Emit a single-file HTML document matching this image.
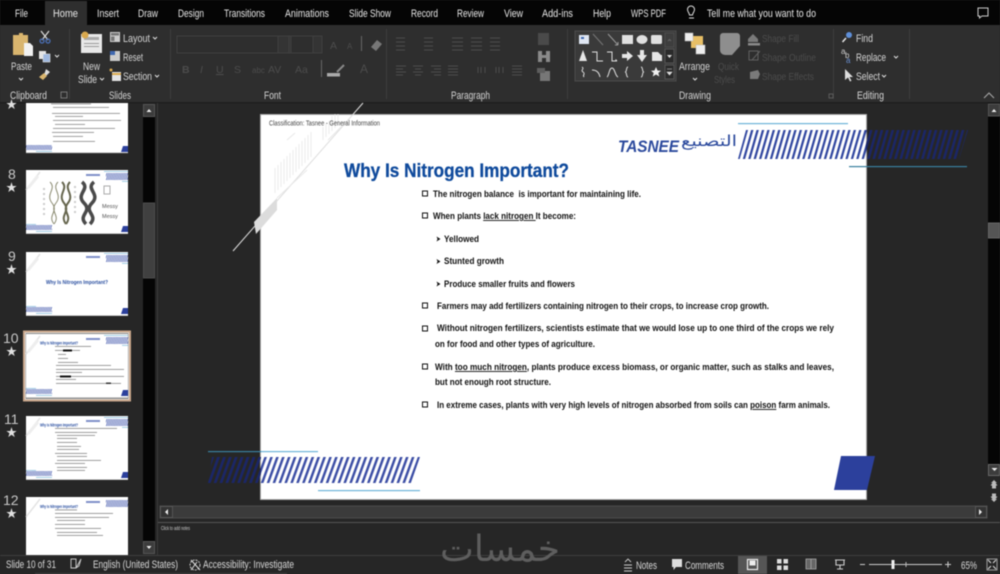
<!DOCTYPE html>
<html><head><meta charset="utf-8"><title>Slide</title>
<style>
html,body{margin:0;padding:0;width:1000px;height:574px;overflow:hidden;background:#262626}
svg{display:block;filter:blur(.4px)}
text{font-family:"Liberation Sans","Noto Sans CJK SC",sans-serif;white-space:pre}
.m{font-size:11px;fill:#e8e8e8}
.l{font-size:11px;fill:#d4d4d4}
.d{font-size:10.5px;fill:#4c4c4c}
.s{font-size:11px;fill:#d8d8d8}
.n{font-size:14px;fill:#c8c8c8}
.b{font-size:9px;font-weight:bold;fill:#111}
.bl{fill:none;stroke:#111;stroke-width:1}
.gs{fill:none;stroke:#4c4c4c;stroke-width:1}
.ws{fill:none;stroke:#e0e0e0;stroke-width:1}
.st{font-size:11px;fill:#e0e0e0}
.tt{font-size:4.800px;font-weight:bold;fill:#2a4fa0}
</style></head><body>
<svg width="1000" height="574" viewBox="0 0 1000 574" xmlns="http://www.w3.org/2000/svg">
<defs>
<pattern id="h1" patternUnits="userSpaceOnUse" width="5.4" height="30" patternTransform="skewX(-16)"><rect width="2.3" height="30" fill="#2f459f"/></pattern>
<pattern id="h2" patternUnits="userSpaceOnUse" width="5.4" height="30" patternTransform="skewX(-16)"><rect width="2.6" height="30" fill="#1b2668"/></pattern>
<pattern id="h3" patternUnits="userSpaceOnUse" width="5.9" height="30" patternTransform="skewX(-20)"><rect width="2.6" height="30" fill="#3c4ea5"/></pattern>
<pattern id="h4" patternUnits="userSpaceOnUse" width="5.9" height="30" patternTransform="skewX(-20)"><rect width="2.8" height="30" fill="#1b2668"/></pattern>
<pattern id="h5" patternUnits="userSpaceOnUse" width="1.6" height="10" patternTransform="skewX(-18)"><rect width=".8" height="10" fill="#4c60b0"/></pattern>
<g id="thbase">
<rect width="102" height="64" fill="#fff"/>
<path d="M0 20L14 2" stroke="#e4e4e4" stroke-width="1.500"/>
<path d="M2 18l10-12" stroke="#eee" stroke-width="3"/>
<rect x="60" y="4" width="14" height="2" fill="#7f90c8"/>
<rect x="80" y="3" width="22" height="7" fill="url(#h5)"/>
<rect x="78" y="1" width="24" height=".8" fill="#8fc4e0"/>
<rect x="96" y="11" width="6" height=".8" fill="#8fc4e0"/>
<rect x="0" y="55" width="26" height="5" fill="url(#h5)"/>
<rect x="0" y="54" width="10" height=".7" fill="#8fc4e0"/>
<rect x="10" y="61" width="16" height=".8" fill="#8fc4e0"/>
<path d="M97 56H102V62H95Z" fill="#2c409c"/>
<rect x="0" y="63.400" width="102" height=".6" fill="#aaa"/>
</g>
</defs>

<!-- base -->
<rect width="1000" height="574" fill="#262626"/>
<rect width="1000" height="25" fill="#050505"/>
<rect y="25" width="1000" height="77" fill="#2e2e2e"/>
<rect y="102" width="1000" height="1.500" fill="#1e1e1e"/>
<rect x="45" y="1" width="42" height="24" fill="#2e2e2e"/>

<!-- menu -->
<text class="m" x="15" y="17" textLength="13" lengthAdjust="spacingAndGlyphs">File</text>
<text class="m" x="53" y="17" textLength="25" lengthAdjust="spacingAndGlyphs">Home</text>
<text class="m" x="97" y="17" textLength="22" lengthAdjust="spacingAndGlyphs">Insert</text>
<text class="m" x="138" y="17" textLength="20" lengthAdjust="spacingAndGlyphs">Draw</text>
<text class="m" x="178" y="17" textLength="26" lengthAdjust="spacingAndGlyphs">Design</text>
<text class="m" x="224" y="17" textLength="41" lengthAdjust="spacingAndGlyphs">Transitions</text>
<text class="m" x="285" y="17" textLength="44" lengthAdjust="spacingAndGlyphs">Animations</text>
<text class="m" x="349" y="17" textLength="42" lengthAdjust="spacingAndGlyphs">Slide Show</text>
<text class="m" x="411" y="17" textLength="27" lengthAdjust="spacingAndGlyphs">Record</text>
<text class="m" x="457" y="17" textLength="27" lengthAdjust="spacingAndGlyphs">Review</text>
<text class="m" x="504" y="17" textLength="19" lengthAdjust="spacingAndGlyphs">View</text>
<text class="m" x="542" y="17" textLength="31" lengthAdjust="spacingAndGlyphs">Add-ins</text>
<text class="m" x="593" y="17" textLength="18" lengthAdjust="spacingAndGlyphs">Help</text>
<text class="m" x="631" y="17" textLength="35" lengthAdjust="spacingAndGlyphs">WPS PDF</text>
<path d="M689 18h5M689.500 15c0-2-2-3-2-5.500a3.500 3.500 0 0 1 7 0c0 2.500-2 3.500-2 5.500z" fill="none" stroke="#ddd" stroke-width="1"/>
<text class="m" x="707" y="17" textLength="109" lengthAdjust="spacingAndGlyphs">Tell me what you want to do</text>
<path d="M978 8h10v8h-6l-2.500 2v-2h-1.500z" fill="none" stroke="#ccc" stroke-width="1"/>

<!-- separators -->
<g fill="#3d3d3d">
<rect x="69" y="29" width="1" height="70"/><rect x="170" y="29" width="1" height="70"/>
<rect x="386" y="29" width="1" height="70"/><rect x="567" y="29" width="1" height="70"/>
<rect x="833" y="29" width="1" height="70"/><rect x="909" y="29" width="1" height="70"/>
</g>

<!-- Clipboard -->
<path d="M13 35h6v-2h4v2h5v20H13z" fill="#d9b56e"/>
<path d="M24 43h6l3 3v10h-9z" fill="#f2f2f2"/>
<path d="M41 31l7 9M49 31l-7 9" stroke="#ddd" stroke-width="1.200"/>
<circle cx="42" cy="41" r="2" fill="none" stroke="#4a6fb5" stroke-width="1.300"/><circle cx="48" cy="41" r="2" fill="none" stroke="#4a6fb5" stroke-width="1.300"/>
<rect x="39" y="51" width="7" height="8" fill="#e4e4e4"/><rect x="43" y="54" width="7" height="8" fill="#9fb8df" stroke="#e4e4e4" stroke-width=".6"/>
<path d="M55 55l2 2 2-2" class="ws" stroke-width=".8"/>
<path d="M46 69l4 3-5 5-1-2z" fill="#ddd"/><path d="M44 73l3 3-4 4-4-3z" fill="#d9b56e"/>
<text class="l" x="11" y="70" textLength="21" lengthAdjust="spacingAndGlyphs">Paste</text>
<path d="M19 78l2 2 2-2" class="ws"/>
<text class="l" x="10" y="99" textLength="37" lengthAdjust="spacingAndGlyphs">Clipboard</text>
<rect x="61" y="92" width="6" height="6" fill="none" stroke="#888" stroke-width=".8"/>

<!-- Slides -->
<rect x="81" y="34" width="21" height="19" fill="#e8e8e8"/><rect x="84" y="37" width="15" height="3" fill="#aaa"/><rect x="84" y="43" width="15" height="1" fill="#999"/><rect x="84" y="46" width="15" height="1" fill="#999"/>
<circle cx="85" cy="35" r="3.500" fill="#d9a94e"/>
<text class="l" x="83" y="70" textLength="17" lengthAdjust="spacingAndGlyphs">New</text>
<text class="l" x="78" y="83" textLength="19" lengthAdjust="spacingAndGlyphs">Slide</text>
<path d="M100 78l2 2 2-2" class="ws"/>
<rect x="110" y="32" width="10" height="10" fill="#ccc"/><rect x="111" y="33" width="8" height="2.500" fill="#777"/><rect x="111" y="36.500" width="3.500" height="4.500" fill="#777"/>
<text class="l" x="123" y="42" textLength="27" lengthAdjust="spacingAndGlyphs">Layout</text><path d="M153 37l2 2 2-2" class="ws"/>
<rect x="110" y="51" width="10" height="10" fill="#ccc"/><rect x="110" y="51" width="5" height="4" fill="#3f68b0"/>
<text class="l" x="123" y="61" textLength="20" lengthAdjust="spacingAndGlyphs">Reset</text>
<rect x="112" y="72" width="9" height="9" fill="#e4e4e4"/><rect x="112" y="73" width="9" height="2" fill="#d9a94e"/><circle cx="111" cy="70" r="1.500" fill="#d9a94e"/>
<text class="l" x="123" y="80" textLength="29" lengthAdjust="spacingAndGlyphs">Section</text><path d="M155 75l2 2 2-2" class="ws"/>
<text class="l" x="109" y="99" textLength="22" lengthAdjust="spacingAndGlyphs">Slides</text>

<!-- Font (disabled) -->
<rect x="177" y="36" width="114" height="17" fill="none" stroke="#404040"/>
<rect x="278" y="36" width="13" height="17" fill="#343434" stroke="#404040"/>
<rect x="289" y="36" width="33" height="17" fill="none" stroke="#404040"/>
<rect x="313" y="36" width="9" height="17" fill="#343434" stroke="#404040"/>
<text class="d" x="330" y="49">A</text><text class="d" x="347" y="49" style="font-size:8px">A</text>
<text class="d" x="182" y="73" style="font-weight:bold">B</text><text class="d" x="200" y="73" style="font-style:italic">I</text>
<text class="d" x="216" y="73" style="text-decoration:underline">U</text><text class="d" x="234" y="73">S</text>
<text class="d" x="252" y="73" style="font-size:8px">abc</text><text class="d" x="268" y="73">AV</text><text class="d" x="295" y="73">Aa</text>
<text class="d" x="360" y="73" style="font-size:12px">A</text>
<rect x="321" y="60" width="1" height="17" fill="#666"/>
<rect x="361" y="36" width="1" height="15" fill="#666"/>
<path d="M371 47l6-7 5 4-6 7z" fill="#777"/>
<path d="M337 72l7-7" stroke="#888" stroke-width="2"/><rect x="327" y="73" width="13" height="3.500" fill="#aaa"/>
<text class="l" x="264" y="99" textLength="17" lengthAdjust="spacingAndGlyphs">Font</text>

<!-- Paragraph (disabled) -->
<path class="gs" d="M396 38h9M396 42h9M396 46h9M396 50h9M424 38h9M424 42h9M424 46h9M424 50h9M452 38h11M452 42h11M452 46h11M452 50h11M471 38h11M471 42h11M471 46h11M471 50h11M490 38h10M490 42h10M490 46h10M490 50h10"/>
<path class="gs" d="M396 66h10M396 69h7M396 72h10M396 75h7M413 66h10M415 69h6M413 72h10M415 75h6M431 66h10M434 69h7M431 72h10M434 75h7M448 66h10M448 69h10M448 72h10M448 75h10M478 67v6M481 67v6M485 67v6M496 67v6M499 67v6M503 67v6M512 66h10M512 69h10M512 72h10M512 75h10"/>
<rect x="538" y="33" width="11" height="12" fill="#4a4a4a"/>
<rect x="538" y="51" width="4" height="11" fill="#8a8a8a"/><rect x="546" y="51" width="4" height="11" fill="#8a8a8a"/><rect x="541" y="55" width="6" height="3" fill="#8a8a8a"/>
<rect x="540" y="71" width="10" height="10" fill="#777"/><rect x="537" y="68" width="8" height="5" fill="#5e5e5e"/>
<text class="l" x="451" y="99" textLength="39" lengthAdjust="spacingAndGlyphs">Paragraph</text>

<!-- Shape gallery -->
<rect x="575" y="31" width="101" height="50" fill="#3a3a3a" stroke="#4c4c4c"/>
<rect x="579" y="35" width="10" height="9" fill="#dfe6f2"/><rect x="581" y="37" width="3" height="2" fill="#3f68b0"/>
<path d="M593 34l10 11" stroke="#777" stroke-width="1"/>
<path d="M608 34l10 11M618 45v-3M618 45h-3" fill="none" stroke="#999" stroke-width="1"/>
<rect x="622" y="35" width="11" height="9" fill="#e0e0e0"/>
<ellipse cx="642" cy="39.500" rx="5.500" ry="4.500" fill="#e0e0e0"/>
<rect x="651" y="35" width="11" height="9" rx="1.500" fill="#e0e0e0"/>
<path d="M579 61l4-11 4 11z" fill="#e6e6e6"/>
<path d="M592 52h5v9h6" class="ws"/>
<path d="M607 52h5v9h5M617 61l-1.500-1.500" class="ws"/>
<path d="M622 54h5v-3l6 5-6 5v-3h-5z" fill="#e6e6e6"/>
<path d="M640 50h4v5h3l-5 7-5-7h3z" fill="#e6e6e6"/>
<path d="M652 52h6l3 3h1v6h-10z" fill="#e6e6e6"/>
<path d="M582 67c3 2-2 3 1 5s-1 3 1 5" class="ws"/>
<path d="M592 70c4 0 7 2 8 7" class="ws"/>
<path d="M607 77c2-1 2-9 5-9s3 8 6 9" class="ws"/>
<path d="M628 67c-2 0-1 4-2.500 5 1.500 1 .5 5 2.500 5" class="ws"/>
<path d="M641 67c2 0 1 4 2.500 5-1.500 1-.5 5-2.500 5" class="ws"/>
<path d="M656 67l1.500 3.500 3.500.3-2.700 2.200 1 3.500-3.300-2-3.300 2 1-3.500-2.700-2.200 3.500-.3z" fill="#eee"/>
<rect x="665" y="33" width="9" height="14" fill="#3e3e3e" stroke="#4c4c4c"/><path d="M668 41l1.500-1.500 1.500 1.500" stroke="#666" fill="none"/>
<rect x="665" y="49" width="9" height="14" fill="#2b2b2b" stroke="#555"/><path d="M667 55h5l-2.500 3z" fill="#ddd"/>
<rect x="665" y="65" width="9" height="14" fill="#2b2b2b" stroke="#555"/><path d="M667 69h5M667 72h5l-2.500 3z" fill="#ddd" stroke="#ddd" stroke-width=".6"/>
<text class="l" x="679" y="99" textLength="32" lengthAdjust="spacingAndGlyphs">Drawing</text>
<rect x="829" y="94" width="4" height="4" fill="none" stroke="#666" stroke-width=".8"/>

<!-- Arrange -->
<rect x="691" y="36" width="12" height="12" fill="#e8bf66"/>
<rect x="685" y="33" width="8" height="8" fill="#eee" stroke="#bbb" stroke-width=".5"/>
<rect x="696" y="45" width="9" height="9" fill="#eee" stroke="#bbb" stroke-width=".5"/>
<text class="l" x="679" y="70" textLength="31" lengthAdjust="spacingAndGlyphs">Arrange</text>
<path d="M693 78l2 2 2-2" class="ws"/>
<path d="M723 33h14a3 3 0 0 1 3 3v10l-8 9h-7a5 5 0 0 1-5-5V36a3 3 0 0 1 3-3z" fill="#8e8e8e"/>
<text class="d" x="718" y="70" textLength="21" lengthAdjust="spacingAndGlyphs">Quick</text>
<text class="d" x="714" y="83" textLength="21" lengthAdjust="spacingAndGlyphs">Styles</text>
<path d="M748 42h10v-3l-5-5-5 5z" fill="#7a7a7a"/><rect x="748" y="43" width="12" height="2.500" fill="#8a8a8a"/>
<text class="d" x="762" y="42" textLength="37" lengthAdjust="spacingAndGlyphs">Shape Fill</text>
<rect x="749" y="51" width="9" height="9" fill="none" stroke="#606060"/><path d="M752 60l8-9" stroke="#606060"/>
<text class="d" x="762" y="61" textLength="54" lengthAdjust="spacingAndGlyphs">Shape Outline</text>
<path d="M750 72l8-2 2 4-2 5-8 0z" fill="#7a7a7a"/>
<text class="d" x="762" y="80" textLength="52" lengthAdjust="spacingAndGlyphs">Shape Effects</text>

<!-- Editing -->
<circle cx="849" cy="35" r="3" fill="#5f8fd8"/><path d="M846 38l-3.500 4" stroke="#e8e8e8" stroke-width="1.500"/>
<text class="l" x="856" y="42" textLength="17" lengthAdjust="spacingAndGlyphs">Find</text>
<text x="841" y="54" style="font-size:8px;fill:#ccc">a</text><text x="845" y="58" style="font-size:8px;fill:#ccc">b</text><text x="846" y="63" style="font-size:8px;fill:#6a8fd0">a</text>
<text class="l" x="856" y="61" textLength="30" lengthAdjust="spacingAndGlyphs">Replace</text><path d="M894 56l2 2 2-2" class="ws"/>
<path d="M845 69v11l3-2.500 2 4 1.500-.8-2-3.700h3.500z" fill="#ddd"/>
<text class="l" x="856" y="80" textLength="24" lengthAdjust="spacingAndGlyphs">Select</text><path d="M882 75l2 2 2-2" class="ws"/>
<text class="l" x="857" y="99" textLength="27" lengthAdjust="spacingAndGlyphs">Editing</text>
<path d="M984 98l5-5 5 5" fill="none" stroke="#aaa" stroke-width="1"/>

<!-- Left scrollbar -->
<rect x="143" y="104" width="12" height="449" fill="#050505"/>
<rect x="143.500" y="104.500" width="11" height="12" fill="#3c3c3c" stroke="#555"/>
<path d="M146.500 112h5l-2.500-3z" fill="#eee"/>
<rect x="143.500" y="203" width="11" height="75" fill="#404040" stroke="#4c4c4c"/>
<rect x="143.500" y="541.500" width="11" height="12" fill="#3c3c3c" stroke="#555"/>
<path d="M146.500 546h5l-2.500 3z" fill="#eee"/>
<rect x="157" y="103" width="1" height="452" fill="#3a3a3a"/>

<!-- Thumbnails -->
<rect x="26" y="103" width="102" height="50" fill="#fff"/>
<g fill="#8a8a8a">
<rect x="51" y="103.500" width="40" height=".8"/><rect x="53" y="107" width="56" height=".8"/>
<rect x="52" y="113" width="68" height=".8"/><rect x="55" y="116" width="28" height=".8"/>
<rect x="53" y="120" width="68" height=".8"/><rect x="55" y="124" width="30" height=".8"/>
<rect x="53" y="128" width="62" height=".8"/><rect x="52" y="132" width="42" height=".8"/>
<rect x="53" y="136" width="30" height=".8"/><rect x="53" y="141" width="42" height=".8"/>
</g>
<rect x="26" y="145" width="26" height="5" fill="url(#h5)"/><rect x="36" y="151" width="16" height=".8" fill="#8fc4e0"/>
<path d="M123 146H128V152H121Z" fill="#2c409c"/>
<rect x="26" y="152.500" width="102" height=".7" fill="#aaa"/>
<text x="6" y="108" class="st">★</text>

<text class="n" x="8" y="179">8</text>
<text x="6" y="191" class="st">★</text>
<use href="#thbase" x="26" y="170"/>
<g fill="none">
<path d="M50 182c7 7-5 12 2 21s-5 12 2 21M58 182c-7 7 5 12-2 21s5 12-2 21" stroke="#8a8a70" stroke-width="1"/>
<path d="M62 182c7 7-5 12 2 21s-5 12 2 21M70 182c-7 7 5 12-2 21s5 12-2 21" stroke="#66664e" stroke-width="2"/>
<path d="M82 182c9 7-7 12 2 21s-7 12 2 21M94 182c-9 7 7 12-2 21s7 12-2 21" stroke="#4a4a4a" stroke-width="3.500"/>
<path d="M44 188v30M75 186v30" stroke="#ccc" stroke-width="2" stroke-dasharray="2 3"/>
</g>
<rect x="104" y="186" width="6" height="8" fill="none" stroke="#aaa"/>
<text x="102" y="208" style="font-size:5.500px;fill:#555">Messy</text>
<text x="102" y="218" style="font-size:5.500px;fill:#555">Messy</text>

<text class="n" x="8" y="261">9</text>
<text x="6" y="273" class="st">★</text>
<use href="#thbase" x="26" y="252"/>
<text x="46" y="284" style="font-size:5.500px;font-weight:bold;fill:#2a4fa0" textLength="62" lengthAdjust="spacingAndGlyphs">Why Is Nitrogen Important?</text>

<text class="n" x="3" y="343">10</text>
<text x="6" y="355" class="st">★</text>
<rect x="24" y="331.500" width="106" height="69" fill="#fff" stroke="#c9a78c" stroke-width="2"/>
<rect x="26" y="333.500" width="102" height="65" fill="#fff" stroke="#666" stroke-width=".8"/>
<use href="#thbase" x="26" y="334"/>
<text class="tt" x="40" y="344.500" textLength="38" lengthAdjust="spacingAndGlyphs">Why Is Nitrogen Important?</text>
<g fill="#888">
<rect x="55" y="346" width="36" height=".8"/><rect x="55" y="350" width="25" height=".8"/>
<rect x="58" y="354" width="8" height=".8"/><rect x="58" y="358" width="10" height=".8"/><rect x="58" y="362" width="20" height=".8"/>
<rect x="56" y="365" width="55" height=".8"/><rect x="56" y="369" width="68" height=".8"/><rect x="56" y="372" width="26" height=".8"/>
<rect x="56" y="376" width="68" height=".8"/><rect x="56" y="379" width="20" height=".8"/><rect x="56" y="383" width="65" height=".8"/>
<rect x="63" y="349.500" width="9" height="2" fill="#111"/><rect x="60" y="375.500" width="11" height="2" fill="#111"/><rect x="106" y="382.500" width="5" height="1.500" fill="#333"/>
</g>

<text class="n" x="4" y="424">11</text>
<text x="6" y="436" class="st">★</text>
<use href="#thbase" x="26" y="416"/>
<text class="tt" x="40" y="426.500" textLength="38" lengthAdjust="spacingAndGlyphs">Why Is Nitrogen Important?</text>
<g fill="#888">
<rect x="55" y="428" width="62" height=".8"/><rect x="55" y="432" width="42" height=".8"/><rect x="57" y="435" width="38" height=".8"/>
<rect x="57" y="438" width="20" height=".8"/><rect x="57" y="442" width="20" height=".8"/><rect x="57" y="446" width="24" height=".8"/>
<rect x="57" y="449" width="22" height=".8"/><rect x="55" y="453" width="32" height=".8"/><rect x="57" y="456" width="30" height=".8"/>
<rect x="57" y="460" width="44" height=".8"/><rect x="55" y="463" width="30" height=".8"/><rect x="57" y="467" width="30" height=".8"/><rect x="57" y="470" width="28" height=".8"/>
</g>

<text class="n" x="3" y="505">12</text>
<text x="6" y="517" class="st">★</text>
<rect x="26" y="497" width="102" height="58" fill="#fff"/>
<path d="M26 517L40 499" stroke="#e4e4e4" stroke-width="1.500"/>
<rect x="86" y="501" width="14" height="2" fill="#7f90c8"/><rect x="106" y="500" width="22" height="7" fill="url(#h5)"/>
<text class="tt" x="40" y="508" textLength="38" lengthAdjust="spacingAndGlyphs">Why Is Nitrogen Important?</text>
<g fill="#888">
<rect x="55" y="509.500" width="22" height=".8"/><rect x="55" y="513" width="58" height=".8"/><rect x="55" y="517" width="54" height=".8"/>
<rect x="57" y="520" width="28" height=".8"/><rect x="55" y="524" width="30" height=".8"/><rect x="55" y="528" width="46" height=".8"/>
<rect x="57" y="532" width="40" height=".8"/><rect x="57" y="535" width="46" height=".8"/>
</g>

<!-- Slide -->
<rect x="260" y="114" width="607" height="386" fill="#aaa"/>
<rect x="261" y="115" width="605" height="384" fill="#fff"/>

<!-- top-left decor -->
<path d="M233 251L363 103" stroke="#dedede" stroke-width="1"/>
<path d="M254 222L277 198V210L256 234Z" fill="#dcdcdc"/>
<g stroke="#e8e8e8" stroke-width=".9">
<path d="M275 193v-25M278 190v-25M281 187v-25M284 184v-25M287 181v-25M290 178v-25M293 175v-25M296 172v-25M299 169v-25M302 166v-25M305 163v-25M308 160v-25M311 157v-25"/>
<path d="M323 140v-13M326 137v-13M329 134v-13M332 131v-15M335 128v-14M338 125v-11"/>
<path d="M287 140l8-7M328 140l17-17M307 170l-30 28"/>
</g>

<text x="269" y="125.500" style="font-size:7px;fill:#444" textLength="111" lengthAdjust="spacingAndGlyphs">Classification: Tasnee - General Information</text>

<text x="344" y="177" style="font-size:19px;font-weight:bold;fill:#0f4a9c" textLength="225" lengthAdjust="spacingAndGlyphs" stroke="#0f4a9c" stroke-width=".3">Why Is Nitrogen Important?</text>

<!-- logo -->
<text x="618" y="152" style="font-size:17px;font-weight:bold;font-style:italic;fill:#2c4a9d" textLength="61" lengthAdjust="spacingAndGlyphs">TASNEE</text>
<text x="681" y="146" style="font-size:15px;fill:#2c4a9d;font-family:'DejaVu Sans',sans-serif" textLength="56" lengthAdjust="spacingAndGlyphs">التصنيع</text>

<!-- top hatch -->
<rect x="738" y="123" width="110" height="1.200" fill="#6db4d8"/>
<rect x="849" y="166" width="118" height="1.200" fill="#3a7f9e"/>
<path d="M738 159L746 130H866V159Z" fill="url(#h1)"/>
<path d="M866 159V130H968L959 159Z" fill="url(#h2)"/>

<!-- bottom hatch -->
<rect x="208" y="451" width="53" height="1.200" fill="#3a7f9e"/>
<rect x="261" y="451" width="57" height="1.200" fill="#6db4d8"/>
<rect x="318" y="490" width="102" height="1.200" fill="#6db4d8"/>
<path d="M208 483L212 457H261V483Z" fill="url(#h4)"/>
<path d="M261 483V457H420L411 483Z" fill="url(#h3)"/>

<!-- blue shape -->
<path d="M841 456H875L867 490H834Z" fill="#2c409c"/>

<!-- Bullets -->
<rect class="bl" x="422.500" y="191" width="5" height="5"/>
<rect class="bl" x="422.500" y="213" width="5" height="5"/>
<rect class="bl" x="422.500" y="303" width="5" height="5"/>
<rect class="bl" x="422.500" y="326" width="5" height="5"/>
<rect class="bl" x="422.500" y="364" width="5" height="5"/>
<rect class="bl" x="422.500" y="402" width="5" height="5"/>
<path d="M436.500 236.500l4 2.500-4 2.500 1-2.500zM436.500 259l4 2.500-4 2.500 1-2.500zM436.500 281.500l4 2.500-4 2.500 1-2.500z" fill="#111"/>
<text class="b" x="433" y="197" textLength="208" lengthAdjust="spacingAndGlyphs">The nitrogen balance  is important for maintaining life.</text>
<text class="b" x="433" y="219" textLength="143" lengthAdjust="spacingAndGlyphs">When plants <tspan text-decoration="underline">lack nitrogen </tspan>It become:</text>
<text class="b" x="444" y="242" textLength="35" lengthAdjust="spacingAndGlyphs">Yellowed</text>
<text class="b" x="444" y="264" textLength="60" lengthAdjust="spacingAndGlyphs">Stunted growth</text>
<text class="b" x="444" y="287" textLength="131" lengthAdjust="spacingAndGlyphs">Produce smaller fruits and flowers</text>
<text class="b" x="437" y="309" textLength="332" lengthAdjust="spacingAndGlyphs">Farmers may add fertilizers containing nitrogen to their crops, to increase crop growth.</text>
<text class="b" x="437" y="331" textLength="397" lengthAdjust="spacingAndGlyphs">Without nitrogen fertilizers, scientists estimate that we would lose up to one third of the crops we rely</text>
<text class="b" x="435" y="347" textLength="160" lengthAdjust="spacingAndGlyphs">on for food and other types of agriculture.</text>
<text class="b" x="435" y="370" textLength="399" lengthAdjust="spacingAndGlyphs">With <tspan text-decoration="underline">too much nitrogen</tspan>, plants produce excess biomass, or organic matter, such as stalks and leaves,</text>
<text class="b" x="435" y="385" textLength="116" lengthAdjust="spacingAndGlyphs">but not enough root structure.</text>
<text class="b" x="437" y="408" textLength="393" lengthAdjust="spacingAndGlyphs">In extreme cases, plants with very high levels of nitrogen absorbed from soils can <tspan text-decoration="underline">poison</tspan> farm animals.</text>

<!-- Main vertical scrollbar -->
<rect x="988" y="103" width="12" height="361" fill="#050505"/>
<rect x="988.500" y="104" width="11" height="12" fill="#3c3c3c" stroke="#555"/>
<path d="M991.500 112h5l-2.500-3z" fill="#eee"/>
<rect x="988.500" y="223" width="11" height="15" fill="#555" stroke="#666"/>
<rect x="988.500" y="464.500" width="11" height="11" fill="#3c3c3c" stroke="#666"/>
<path d="M991.500 468h6l-3 3z" fill="#eee"/>
<path d="M994 480l3 3h-1.500l2 2.500h-1.500v3h-4v-3h-1.500l2-2.500h-1.500z" fill="#bbb"/>
<path d="M994 502l3-3h-1.500l2-2.500h-1.500v-3h-4v3h-1.500l2 2.500h-1.500z" fill="#bbb"/>

<!-- Horizontal scrollbar -->
<rect x="160" y="506" width="827" height="12" fill="#3b3b3b" stroke="#4c4c4c"/>
<rect x="160.500" y="506.500" width="12" height="11" fill="#333" stroke="#555"/>
<path d="M168 509v6l-3-3z" fill="#eee"/>
<rect x="975.500" y="506.500" width="11" height="11" fill="#333" stroke="#555"/>
<path d="M979 509v6l3-3z" fill="#eee"/>
<rect x="158" y="522" width="842" height="1" fill="#555"/>
<text x="161" y="530" style="font-size:5.500px;fill:#ccc" textLength="29" lengthAdjust="spacingAndGlyphs">Click to add notes</text>

<!-- Status bar -->
<rect y="555" width="1000" height="19" fill="#262626"/>
<rect y="555" width="1000" height="1" fill="#3e3e3e"/>
<rect x="35" y="573" width="252" height="1" fill="#444"/>
<text x="440" y="561" style="font-size:36px;fill:#5e5e5e;font-family:'DejaVu Sans','Liberation Sans',sans-serif" textLength="120" lengthAdjust="spacingAndGlyphs">خمسات</text>
<text class="s" x="6" y="568" textLength="50" lengthAdjust="spacingAndGlyphs">Slide 10 of 31</text>
<path d="M71 559h5v9h-5zM76 568l5-9-2 7z" fill="none" stroke="#ccc" stroke-width=".9"/>
<text class="s" x="93" y="568" textLength="85" lengthAdjust="spacingAndGlyphs">English (United States)</text>
<circle cx="195" cy="565" r="5" fill="none" stroke="#ccc" stroke-dasharray="2 1"/><path d="M191 560l9 10M197 562l-6 8" stroke="#e0e0e0" stroke-width="1"/>
<text class="s" x="203" y="568" textLength="91" lengthAdjust="spacingAndGlyphs">Accessibility: Investigate</text>
<path d="M625 562l3-3 3 3M624 565h8M624 568h8M624 571h8" fill="none" stroke="#ccc" stroke-width=".9"/>
<text class="s" x="636" y="569" textLength="21" lengthAdjust="spacingAndGlyphs">Notes</text>
<path d="M672 559h10v8h-6l-2.500 3v-3h-1.500z" fill="#ddd"/>
<text class="s" x="685" y="569" textLength="39" lengthAdjust="spacingAndGlyphs">Comments</text>
<rect x="738" y="556" width="29" height="18" fill="#555"/>
<rect x="747.500" y="559.500" width="10" height="10" fill="none" stroke="#eee" stroke-width="1.200"/><rect x="749.500" y="560.500" width="6" height="5" fill="#eee"/>
<rect x="777" y="559" width="4.500" height="4.500" fill="#ddd"/><rect x="783.500" y="559" width="4.500" height="4.500" fill="#ddd"/><rect x="777" y="565.500" width="4.500" height="4.500" fill="#ddd"/><rect x="783.500" y="565.500" width="4.500" height="4.500" fill="#ddd"/>
<path d="M806 559h10v10h-10zM811 559v10" fill="#666" stroke="#aaa" stroke-width=".8"/>
<path d="M835 560h10M836 560v5h8v-5M840 565v4M837 569h6" fill="none" stroke="#ccc" stroke-width="1.100"/>
<rect x="860" y="564" width="5" height="1" fill="#ccc"/>
<rect x="869" y="564" width="73" height="1" fill="#ccc"/>
<rect x="891.500" y="560" width="3" height="9" fill="#eee"/>
<rect x="905.500" y="562" width="1" height="5" fill="#bbb"/>
<path d="M945 564.500h6M948 561.500v6" stroke="#ccc"/>
<text class="s" x="961" y="569" textLength="16" lengthAdjust="spacingAndGlyphs">65%</text>
<rect x="987" y="559" width="10" height="11" fill="none" stroke="#bbb" stroke-width=".8"/><path d="M988 560l3 3M996 560l-3 3M988 569l3-3M996 569l-3-3" stroke="#ddd"/>
</svg>
</body></html>
